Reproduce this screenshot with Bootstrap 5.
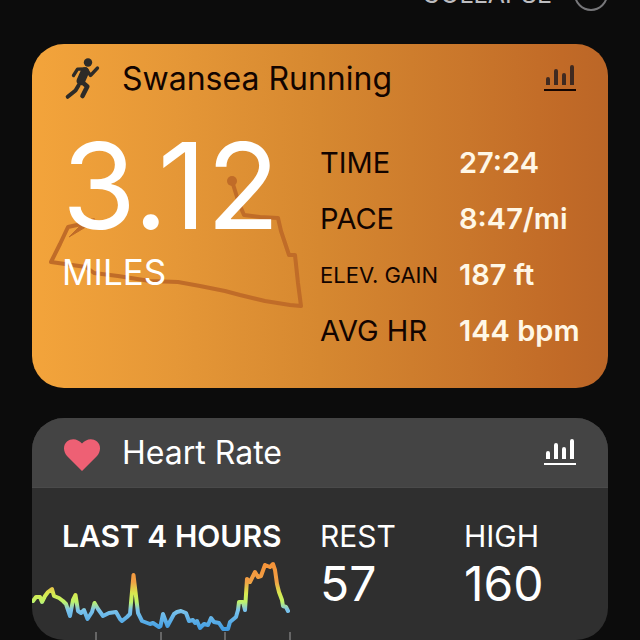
<!DOCTYPE html>
<html lang="en">
<head>
<meta charset="utf-8">
<meta name="viewport" content="width=device-width, initial-scale=1">
<title>Activity summary</title>
<link href="https://cdn.jsdelivr.net/npm/bootstrap@5.3.0/dist/css/bootstrap.min.css" rel="stylesheet">
<style>
  body { background: #0c0c0c; color: #fff; font-family: Inter, "Liberation Sans", sans-serif; overflow-x: hidden; }
  .page { padding: 0 32px; }
  /* The list is scrolled, so the collapse bar is partly above the window. */
  .collapse-bar { margin-top: -23px; margin-bottom: 33px; height: 34px; }
  .collapse-btn { color: #bdbdc0; font-size: 25px; line-height: 34px; gap: 22px; }
  .tile { border-radius: 32px; overflow: hidden; }
  .tile-run { background: linear-gradient(90deg, #f3a43b 0%, #e59737 25%, #d68830 50%, #c9762b 76%, #c16a27 92%, #bb6627 100%); color: #120400; margin-bottom: 30px; }
  .tile-heart { background: #2f2f2f; color: #fff; }
  .tile-top { height: 70px; padding: 0 32px; }
  .tile-heart .tile-top { background: #444; border-bottom: 1px solid #4a4a4a; }
  .tile-icon { width: 58px; }
  .tile-title { font-size: 32px; line-height: 40px; }
  .run-body { padding: 20px 0 29px; }
  .distance { font-size: 120px; line-height: 104px; color: #fff; }
  .unit { font-size: 35px; line-height: 44px; margin-top: 12px; color: #fff; }
  .inset { padding-left: 30px; }
  .route { left: 0; top: 114px; }
  .stats { display: grid; grid-template-columns: 139px 1fr; padding-top: 1px; font-size: 29px; line-height: 56px; white-space: nowrap; }
  .stats dt { font-weight: 400; }
  .stats dt.minor { font-size: 22px; }
  .stats dd { font-weight: 600; color: #fff7e6; }
  .heart-body { padding-top: 30px; }
  .cap { font-size: 30px; line-height: 36px; white-space: nowrap; }
  .reading { font-size: 48px; line-height: 60px; }
</style>
</head>
<body>
<main class="page">
  <div class="collapse-bar d-flex justify-content-end">
    <button type="button" class="collapse-btn btn p-0 border-0 d-flex align-items-center">COLLAPSE
      <svg width="34" height="34" viewBox="0 0 34 34" fill="none" stroke="#77777a" stroke-width="2" aria-hidden="true"><circle cx="17" cy="17" r="16"/><path d="M10 20l7-7 7 7"/></svg>
    </button>
  </div>

  <section class="tile tile-run position-relative">
    <svg class="route position-absolute" width="288" height="220" viewBox="32 158 288 220" fill="none" stroke="#c06c28" stroke-width="4" stroke-linejoin="round" aria-hidden="true">
      <path d="M232 181L237 197 241 208 244 215 260 217 278 218 281 231 287 249 289 255 295 255 298 283 301 306 290 305 265 301 240 295 225 291 200 286 178 282 150 281 118 276 94 273 86 267 51 262 60 244 68 227 77 225 95 220"/>
      <path d="M69 237L80 226 95 221 84 228z" fill="#c06c28" stroke-width="1"/>
      <circle cx="232" cy="181" r="5" fill="#c06c28" stroke="none"/>
    </svg>
    <header class="tile-top position-relative d-flex align-items-center">
      <div class="tile-icon">
        <svg class="d-block" width="38" height="44" viewBox="64 57 38 44" fill="none" stroke="#2d2b28" stroke-linecap="round" stroke-linejoin="round" aria-hidden="true">
          <circle cx="88" cy="62.500" r="4.200" fill="#2d2b28" stroke="none"/>
          <path d="M85 71.500L80.800 81" stroke-width="8.600"/>
          <path d="M73.500 75.500L77.500 69.200 86 69 90.500 75.500 97.500 68" stroke-width="3.300"/>
          <path d="M82 82L87.300 86.500 82.500 96" stroke-width="4.600"/>
          <path d="M78.500 85.500L75.500 90.500 67.700 96.800" stroke-width="4"/>
        </svg>
      </div>
      <h2 class="tile-title fw-normal mb-0 flex-grow-1">Swansea Running</h2>
      <button type="button" class="btn p-0 border-0" aria-label="Running charts">
        <svg class="d-block" width="32" height="28" viewBox="0 0 32 28" aria-hidden="true"><g fill="#402a20"><path d="M2 20v-6a2 2 0 0 1 4 0v6zM10 20V6a2 2 0 0 1 4 0v14zM18 20V10a2 2 0 0 1 4 0v10zM26 20V2a2 2 0 0 1 4 0v18z"/></g><path d="M0 25h32" stroke="#150500" stroke-width="2"/></svg>
      </button>
    </header>
    <div class="run-body position-relative row g-0">
      <div class="col-6 inset">
        <div class="distance">3.12</div>
        <div class="unit">MILES</div>
      </div>
      <dl class="col-6 stats mb-0">
        <dt>TIME</dt><dd class="mb-0">27:24</dd>
        <dt>PACE</dt><dd class="mb-0">8:47/mi</dd>
        <dt class="minor">ELEV. GAIN</dt><dd class="mb-0">187 ft</dd>
        <dt>AVG HR</dt><dd class="mb-0">144 bpm</dd>
      </dl>
    </div>
  </section>

  <section class="tile tile-heart">
    <header class="tile-top d-flex align-items-center">
      <div class="tile-icon">
        <svg class="d-block" width="36" height="36" viewBox="0 -4 36 36" aria-hidden="true"><path d="M18 32L3 17C-1 12-1 6 3 2.500 8-1.500 14 0 18 4.500 22 0 28-1.500 33 2.500 37 6 37 12 33 17z" fill="#ee6074"/></svg>
      </div>
      <h2 class="tile-title fw-normal mb-0 flex-grow-1">Heart Rate</h2>
      <button type="button" class="btn p-0 border-0" aria-label="Heart rate charts">
        <svg class="d-block" width="32" height="28" viewBox="0 0 32 28" aria-hidden="true"><g fill="#fff"><path d="M2 20v-6a2 2 0 0 1 4 0v6zM10 20V6a2 2 0 0 1 4 0v14zM18 20V10a2 2 0 0 1 4 0v10zM26 20V2a2 2 0 0 1 4 0v18z"/></g><path d="M0 25h32" stroke="#fff" stroke-width="2"/></svg>
      </button>
    </header>
    <div class="heart-body row g-0">
      <div class="col-6">
        <h3 class="cap inset fw-semibold mb-0">LAST 4 HOURS</h3>
        <svg class="d-block" width="288" height="86" viewBox="32 554 288 86" fill="none" role="img" aria-label="Heart rate over the last four hours">
          <defs><linearGradient id="pulse" gradientUnits="userSpaceOnUse" x1="0" y1="563" x2="0" y2="630">
            <stop offset="0" stop-color="#f59238"/><stop offset=".28" stop-color="#f1a045"/><stop offset=".45" stop-color="#d9e84e"/><stop offset=".58" stop-color="#bff36a"/><stop offset=".7" stop-color="#7cc4ec"/><stop offset="1" stop-color="#3f9be2"/>
          </linearGradient></defs>
          <path d="M96 632v8M161 632v8M225 632v8M290 632v8" stroke="#666" stroke-width="2"/>
          <path stroke="url(#pulse)" stroke-width="4" stroke-linejoin="round" stroke-linecap="round" d="M33 601L36 597 40 597 42 602 45 596 48 592 52 589 54 596 59 598 63 601 66 604 68 610 70 616 73 600 75.500 595 78 611 81 613 84 610 87.500 619 92 612 94.500 603 98 609 103 616 109 613 116 612 120 619 122 621 127 617 130 614 133.500 575 138 613 142 621 150 624 153 623 159 627 160.500 626 163 614 167.500 626 174 614 177 612 181 611 186 613 189 621 193 620 195 623 197 621 200 628 204 624 208 625 211 618 214 622 219 623 223 629 228 629 230 622 236 617 238 610 239 602 243 602 245 610 247 579 250 582 255 572 258 577 261 576 265 565 270 567 273 564 275 570 277 584 279 592 282 600 283 606 286 607 288 611"/>
        </svg>
      </div>
      <div class="col-3"><div class="cap">REST</div><div class="reading">57</div></div>
      <div class="col-3"><div class="cap">HIGH</div><div class="reading">160</div></div>
    </div>
  </section>
</main>
<script src="https://cdn.jsdelivr.net/npm/bootstrap@5.3.0/dist/js/bootstrap.bundle.min.js"></script>
</body>
</html>
